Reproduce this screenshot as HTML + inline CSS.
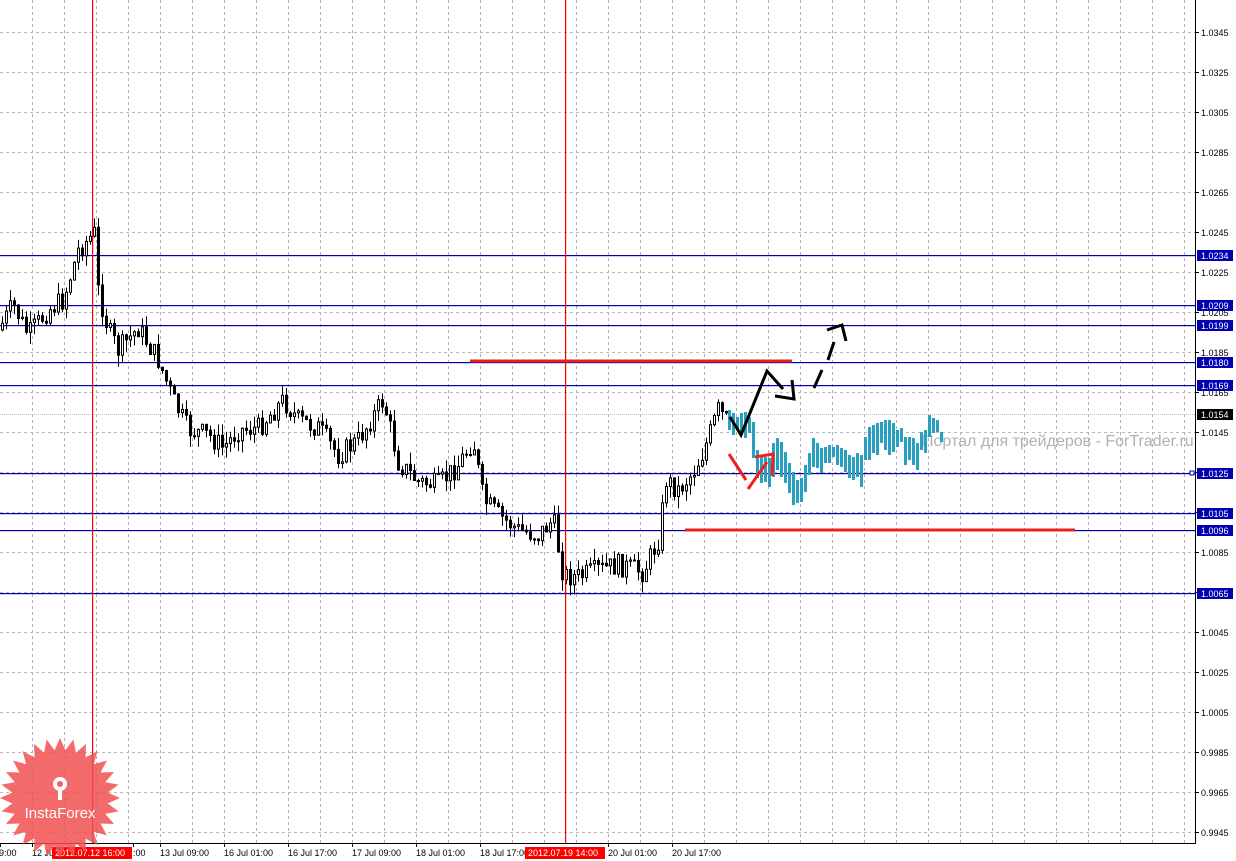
<!DOCTYPE html>
<html><head><meta charset="utf-8"><style>
body{margin:0;background:#fff;width:1236px;height:861px;overflow:hidden;font-family:"Liberation Sans",sans-serif}
svg{position:absolute;left:0;top:0}
</style></head><body>
<svg id="s" width="1236" height="861" xmlns="http://www.w3.org/2000/svg" font-family="Liberation Sans, sans-serif">
<g id="grid"></g>
<text x="922" y="446" font-size="16" fill="#b0b0b0">Портал для трейдеров - ForTrader.ru</text>
<rect x="1196" y="0" width="40" height="861" fill="#fff"/>
<g id="hl"></g>
<g id="c"></g>
<rect x="92" y="0" width="1.2" height="843" fill="#f00"/>
<rect x="565" y="0" width="1.2" height="843" fill="#f00"/>
<g id="t" fill="#2aa0c0"></g>
<line x1="470" y1="361" x2="792" y2="361" stroke="#e82020" stroke-width="3"/>
<line x1="685" y1="530" x2="1075" y2="530" stroke="#e82020" stroke-width="3"/>
<g fill="none" stroke="#000" stroke-width="3" stroke-linejoin="miter">
<polyline points="730,417 741,435 767,371 783,389"/>
<polyline points="775,396 794,399 792,380"/>
<polyline points="814,388 822,370"/>
<polyline points="828,360 834,342"/>
<polyline points="827,330 842,325 846,341"/>
</g>
<g fill="none" stroke="#f02020" stroke-width="3">
<polyline points="729,454 746,480"/>
<polyline points="748,489 767,462"/>
<polyline points="755,457 773,454 772,476"/>
</g>
<line x1="1195.5" y1="0" x2="1195.5" y2="843" stroke="#000"/>
<line x1="0" y1="843.5" x2="1196" y2="843.5" stroke="#000"/>
<g id="ax" font-size="9" fill="#000"></g>
<g transform="translate(60,798)">
<polygon id="star" fill="#f05050" fill-opacity="0.85"></polygon>
<g fill="#fff"><circle cx="0" cy="-14" r="7"/><circle cx="0" cy="-14" r="3" fill="#f06060"/><rect x="-2" y="-10" width="4" height="12"/></g>
<text x="0" y="20" font-size="15" fill="#fff" text-anchor="middle">InstaForex</text>
</g>
</svg>
<script>
(function(){
var NS="http://www.w3.org/2000/svg";
function el(p,t,a,txt){var e=document.createElementNS(NS,t);for(var k in a)e.setAttribute(k,a[k]);if(txt)e.textContent=txt;document.getElementById(p).appendChild(e);return e;}
for(var x=32;x<1196;x+=32)el("grid","line",{x1:x+.5,y1:0,x2:x+.5,y2:843,stroke:"#b8a8b8","stroke-dasharray":"3,3"});
for(var y=32;y<843;y+=40)el("grid","line",{x1:0,y1:y+.5,x2:1196,y2:y+.5,stroke:"#b8b8b8","stroke-dasharray":"3,3"});
el("grid","line",{x1:0,y1:414.5,x2:1196,y2:414.5,stroke:"#c0c0c0","stroke-dasharray":"1,1"});
var lv=[[255,"1.0234"],[305,"1.0209"],[325,"1.0199"],[362,"1.0180"],[385,"1.0169"],[473,"1.0125"],[513,"1.0105"],[530,"1.0096"],[593,"1.0065"]];
lv.forEach(function(l){el("hl","rect",{x:0,y:l[0],width:1196,height:1.2,fill:"#0000b0"});});
for(var i=0;i<21;i++){var y=32+i*40;var v=(1.0345-i*0.002).toFixed(4);el("ax","line",{x1:1196,y1:y+.5,x2:1199,y2:y+.5,stroke:"#000"});el("ax","text",{x:1201,y:y+4},v);}
lv.forEach(function(l){el("ax","rect",{x:1197,y:l[0]-5,width:36,height:11,fill:"#0000b0"});el("ax","text",{x:1201,y:l[0]+4,fill:"#fff"},l[1]);});
el("ax","rect",{x:1197,y:409,width:36,height:11,fill:"#000"});el("ax","text",{x:1201,y:418,fill:"#fff"},"1.0154");
el("ax","rect",{x:1190,y:471,width:4,height:4,fill:"#fff",stroke:"#0000b0"});
var tl=[[0,"9:00"],[32,"12 Ju"],[133,":00"],[160,"13 Jul 09:00"],[224,"16 Jul 01:00"],[288,"16 Jul 17:00"],[352,"17 Jul 09:00"],[416,"18 Jul 01:00"],[480,"18 Jul 17:00"],[608,"20 Jul 01:00"],[672,"20 Jul 17:00"]];
tl.forEach(function(t){el("ax","line",{x1:t[0]+.5,y1:843,x2:t[0]+.5,y2:847,stroke:"#000"});el("ax","text",{x:t[0]+(t[0]?0:-1),y:856},t[1]);});
el("ax","rect",{x:52,y:847,width:80,height:12,fill:"#f00"});el("ax","text",{x:55,y:856,fill:"#fff"},"2012.07.12 16:00");
el("ax","rect",{x:525,y:847,width:80,height:12,fill:"#f00"});el("ax","text",{x:528,y:856,fill:"#fff"},"2012.07.19 14:00");
var pts=[];for(var i=0;i<56;i++){var r=i%2?48:60;var a=i*Math.PI/28;pts.push((r*Math.cos(a)).toFixed(1)+","+(r*Math.sin(a)).toFixed(1));}
document.getElementById("star").setAttribute("points",pts.join(" "));
var kp=[[0,330],[15,305],[30,335],[50,310],[65,300],[80,250],[97,232],[100,290],[110,330],[120,350],[140,328],[160,360],[175,400],[190,430],[210,435],[225,448],[240,430],[260,428],[285,400],[300,420],[320,428],[340,455],[360,440],[385,400],[400,462],[420,482],[440,485],[460,465],[475,440],[485,500],[500,515],[520,530],[540,535],[555,520],[565,575],[580,577],[600,570],[620,565],[645,572],[660,540],[668,480],[680,490],[695,472],[705,452],[720,410],[728,420]];
function f(x){for(var i=1;i<kp.length;i++)if(x<=kp[i][0]){var a=kp[i-1],b=kp[i];return a[1]+(b[1]-a[1])*(x-a[0])/(b[0]-a[0]);}return 420;}
var seed=7;function rnd(){seed=(seed*9301+49297)%233280;return seed/233280;}
var prev=f(0);
for(var x=1;x<728;x+=4){var c=f(x+3)+(rnd()-.5)*22;var o=prev;var hi=Math.min(o,c)-rnd()*12;var lo=Math.max(o,c)+rnd()*12;
el("c","line",{x1:x+1.5,y1:hi,x2:x+1.5,y2:lo,stroke:"#000"});
var by=Math.min(o,c),h=Math.max(1,Math.abs(o-c));
el("c","rect",{x:x+.5,y:by,width:2,height:h,fill:c<o?"#fff":"#000",stroke:"#000"});prev=c;}
var tb=[[728,410,430],[732,413,435],[736,417,430],[740,413,433],[744,412,438],[748,417,433],[752,422,458],[756,450,478],[760,457,483],[764,457,482],[768,458,487],[772,443,477],[776,438,470],[780,442,477],[784,452,483],[788,463,493],[792,472,505],[796,480,503],[800,478,502],[804,465,492],[808,453,475],[812,438,467],[816,443,468],[820,448,473],[824,447,463],[828,445,463],[832,447,457],[836,445,465],[840,448,467],[844,450,472],[848,455,478],[852,457,480],[856,453,477],[860,455,487],[864,437,460],[868,427,460],[872,425,453],[876,423,455],[880,422,443],[884,420,450],[888,420,455],[892,423,452],[896,430,447],[900,428,442],[904,437,465],[908,437,460],[912,438,465],[916,443,470],[920,432,450],[924,430,453],[928,415,437],[932,418,433],[936,420,432],[940,432,442]];
tb.forEach(function(b){el("t","rect",{x:b[0],y:b[1],width:3,height:b[2]-b[1]});});
})();
</script>
</body></html>
